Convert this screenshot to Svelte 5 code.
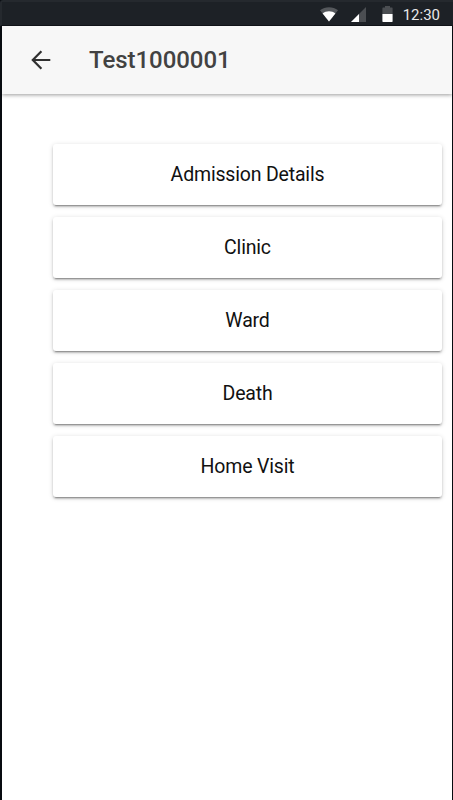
<script lang="ts">
  interface MenuItem {
    id: string;
    label: string;
  }

  const title = 'Test1000001';
  const time = '12:30';

  const items: MenuItem[] = [
    { id: 'admission', label: 'Admission Details' },
    { id: 'clinic', label: 'Clinic' },
    { id: 'ward', label: 'Ward' },
    { id: 'death', label: 'Death' },
    { id: 'home-visit', label: 'Home Visit' }
  ];
</script>

<div class="device">
  <div class="status-bar">
    <svg class="wifi" width="18" height="15" viewBox="0 0 18 15">
      <path d="M0 3.2C5 -0.8 13 -0.8 18 3.2L9 14.4Z" fill="#55585c" />
      <path d="M2.6 6.4C6 3.6 12 3.6 15.4 6.4L9 14.4Z" fill="#fff" />
    </svg>
    <svg class="signal" width="15" height="15" viewBox="0 0 15 15">
      <path d="M15 0V15H0Z" fill="#4b4e52" />
      <path d="M8 7V15H0Z" fill="#fff" />
    </svg>
    <svg class="battery" width="11" height="16" viewBox="0 0 11 16">
      <path d="M3 0H8V1.5H10Q10.6 1.5 10.6 2.2V8H0.4V2.2Q0.4 1.5 1 1.5H3Z" fill="#4b4e52" />
      <path d="M0.4 8H10.6V15.2Q10.6 15.9 10 15.9H1Q0.4 15.9 0.4 15.2Z" fill="#fff" />
    </svg>
    <span class="time">{time}</span>
  </div>

  <div class="screen">
    <header class="toolbar">
      <button type="button" class="back" aria-label="Back">
        <svg width="20" height="20" viewBox="0 0 20 20" fill="none">
          <path d="M19.3 10H2M10.4 1.2L1.8 10L10.4 18.8" stroke="#303030" stroke-width="2.2" />
        </svg>
      </button>
      <h1>{title}</h1>
    </header>

    <main class="menu">
      {#each items as item (item.id)}
        <button type="button" class="menu-button">{item.label}</button>
      {/each}
    </main>
  </div>
</div>

<style>
  :global(body) {
    margin: 0;
    font-family: Roboto, sans-serif;
  }

  .device {
    display: flex;
    flex-direction: column;
    box-sizing: border-box;
    height: 800px;
    overflow: hidden;
    background: #080b10;
  }

  .status-bar {
    display: flex;
    align-items: center;
    justify-content: flex-end;
    box-sizing: border-box;
    flex: none;
    height: 26px;
    margin: 0;
    padding: 3px 13px 0 0;
    background: #1d2126;
    border-top: 2px solid #25292e;
    border-left: 2px solid #25292e;
    border-bottom: 1px solid #101318;
    border-top-left-radius: 3px;
  }

  .wifi,
  .signal {
    margin-top: -1px;
  }

  .signal {
    margin-left: 13px;
  }

  .battery {
    margin-left: 16px;
    margin-top: -2px;
  }

  .time {
    margin-left: 10px;
    font-size: 15px;
    line-height: 18px;
    color: #e8e8e9;
  }

  .screen {
    flex: 1;
    margin: 0 1px 0 2px;
    background: #fff;
  }

  .toolbar {
    display: flex;
    align-items: center;
    height: 68px;
    background: #f7f7f7;
    box-shadow: 0 1px 4px rgba(0, 0, 0, 0.4);
    clip-path: inset(0 0 -6px 0);
  }

  .back {
    display: flex;
    margin-left: 29px;
    padding: 0;
    border: 0;
    background: none;
  }

  h1 {
    margin: 0 0 0 38px;
    font-size: 24px;
    font-weight: 500;
    line-height: 28px;
    letter-spacing: -0.05px;
    color: #424242;
  }

  .menu {
    display: flex;
    flex-direction: column;
    gap: 12px;
    padding: 50px 10px 0 51px;
  }

  .menu-button {
    height: 61px;
    padding: 0;
    border: 0;
    border-radius: 3px;
    background: #fff;
    box-shadow:
      0 2px 2px rgba(0, 0, 0, 0.18),
      0 3px 1px -2px rgba(0, 0, 0, 0.24),
      0 1px 5px rgba(0, 0, 0, 0.16);
    font-family: inherit;
    font-size: 19.5px;
    letter-spacing: -0.18px;
    color: #111;
  }
</style>
